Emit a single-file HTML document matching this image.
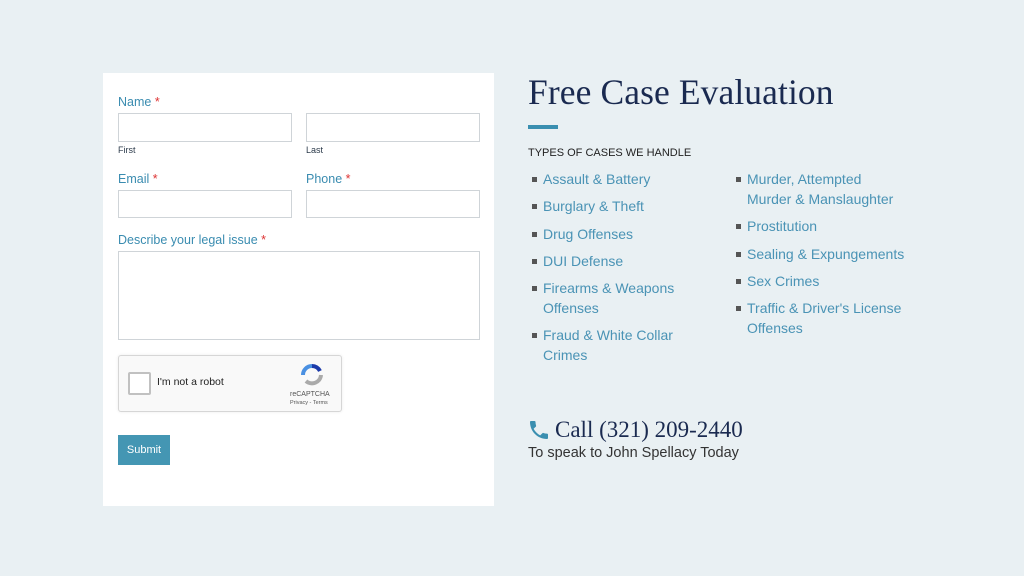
<!DOCTYPE html><html><head><style>
body{margin:0;width:1024px;height:576px;background:#e9f0f3;font-family:"Liberation Sans",sans-serif;position:relative;overflow:hidden}
.a{position:absolute}
.box{left:103px;top:73px;width:391px;height:433px;background:#fff}
.lbl{color:#3a8cb0;font-size:12.5px}
.lbl b{color:#d33;font-weight:normal}
.in{border:1px solid #cfd4d8;background:#fff;box-sizing:border-box}
.sub{font-size:9px;color:#2b3a4a}
ul{list-style:none;margin:0;padding:0}
li{position:relative;padding-left:15px;color:#4a93b5;font-size:14px;line-height:20px;margin-bottom:7.3px}
li:before{content:"";position:absolute;left:4px;top:8px;width:5px;height:5px;background:#555}
</style></head><body>
<div class="a box"></div>
<div class="a lbl" style="left:118px;top:95px">Name <b>*</b></div>
<div class="a in" style="left:118px;top:113px;width:174px;height:29px"></div>
<div class="a in" style="left:306px;top:113px;width:174px;height:29px"></div>
<div class="a sub" style="left:118px;top:145px">First</div>
<div class="a sub" style="left:306px;top:145px">Last</div>
<div class="a lbl" style="left:118px;top:172px">Email <b>*</b></div>
<div class="a lbl" style="left:306px;top:172px">Phone <b>*</b></div>
<div class="a in" style="left:118px;top:190px;width:174px;height:28px"></div>
<div class="a in" style="left:306px;top:190px;width:174px;height:28px"></div>
<div class="a lbl" style="left:118px;top:233px">Describe your legal issue <b>*</b></div>
<div class="a in" style="left:118px;top:251px;width:362px;height:89px"></div>
<div class="a" style="left:118px;top:355px;width:222px;height:55px;background:#f9f9f9;border:1px solid #d6d6d6;border-radius:3px;box-shadow:0 0 3px rgba(0,0,0,.08)"></div>
<div class="a" style="left:128px;top:372px;width:19px;height:19px;border:2px solid #c1c1c1;border-radius:2px;background:#fff"></div>
<div class="a" style="left:157px;top:376px;font-size:10.5px;color:#222">I'm not a robot</div>
<svg class="a" style="left:300px;top:363px" width="24" height="24" viewBox="0 0 24 24"><path d="M12 3a9 9 0 0 1 8 5" stroke="#1c3aa9" stroke-width="4" fill="none"/><path d="M21 12a9 9 0 0 1-15 6" stroke="#aaa" stroke-width="4" fill="none"/><path d="M3 12a9 9 0 0 1 9-9" stroke="#4a90e2" stroke-width="4" fill="none"/></svg>
<div class="a" style="left:290px;top:391px;font-size:7px;color:#555">reCAPTCHA</div>
<div class="a" style="left:290px;top:400px;font-size:5.5px;color:#555">Privacy - Terms</div>
<div class="a" style="left:118px;top:435px;width:52px;height:30px;background:#4496b3;color:#fff;font-size:11px;line-height:30px;text-align:center">Submit</div>
<div class="a" style="left:528px;top:71px;font-family:'Liberation Serif',serif;font-size:35.5px;color:#1a2a50;letter-spacing:.1px">Free Case Evaluation</div>
<div class="a" style="left:528px;top:125px;width:30px;height:4px;background:#3a8fb0"></div>
<div class="a" style="left:528px;top:147px;font-size:11px;color:#222">TYPES OF CASES WE HANDLE</div>
<ul class="a" style="left:528px;top:169px;width:175px">
<li>Assault &amp; Battery</li><li>Burglary &amp; Theft</li><li>Drug Offenses</li><li>DUI Defense</li><li>Firearms &amp; Weapons Offenses</li><li>Fraud &amp; White Collar Crimes</li></ul>
<ul class="a" style="left:732px;top:169px;width:180px">
<li>Murder, Attempted<br>Murder &amp; Manslaughter</li><li>Prostitution</li><li>Sealing &amp; Expungements</li><li>Sex Crimes</li><li>Traffic &amp; Driver's License Offenses</li></ul>
<svg class="a" style="left:527px;top:418px" width="24" height="24" viewBox="0 0 24 24"><path fill="#3a8fb0" d="M6.6 10.8c1.4 2.8 3.8 5.1 6.6 6.6l2.2-2.2c.3-.3.7-.4 1-.2 1.1.4 2.3.6 3.6.6.6 0 1 .4 1 1V20c0 .6-.4 1-1 1C10.6 21 3 13.4 3 4c0-.6.4-1 1-1h3.5c.6 0 1 .4 1 1 0 1.3.2 2.5.6 3.6.1.3 0 .7-.2 1z"/></svg>
<div class="a" style="left:555px;top:417px;font-family:'Liberation Serif',serif;font-size:23px;color:#1a2a50">Call (321) 209-2440</div>
<div class="a" style="left:528px;top:445px;font-size:14.5px;color:#333">To speak to John Spellacy Today</div>
</body></html>
